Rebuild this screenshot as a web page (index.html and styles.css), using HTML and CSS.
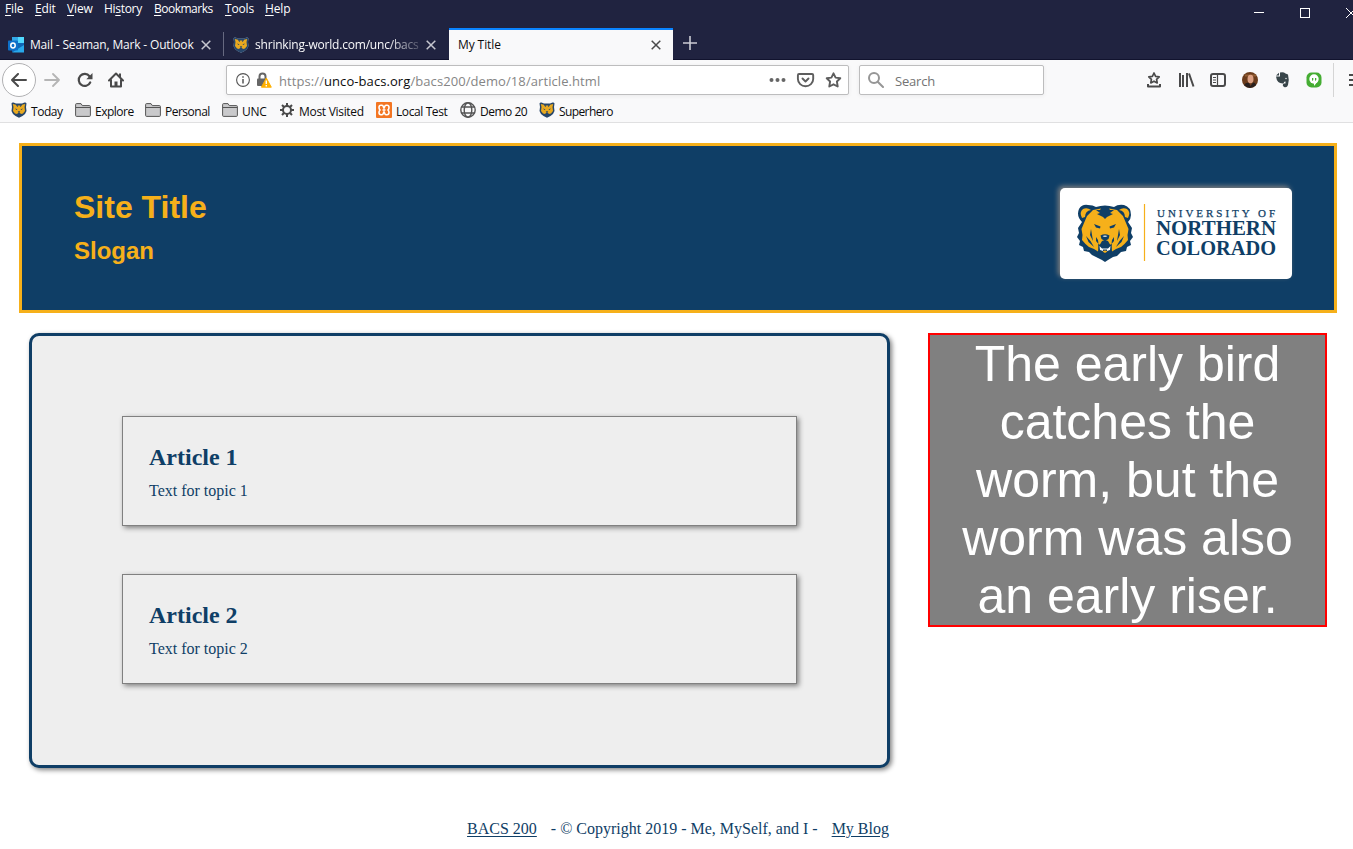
FILE: index.html
```html
<!DOCTYPE html>
<html lang="en">
<head>
<meta charset="utf-8">
<title>My Title</title>
<link rel="stylesheet" href="styles.css">
</head>
<body>
<svg class="defs" width="0" height="0">
  <symbol id="bear" viewBox="0 0 56 58">
    <path fill="#0f3e66" d="M2 5Q5 0 11 1Q16 1 19 3Q28 0 37 3Q41 0 47 1Q54 3 54 11Q54 15 51 18L55 24L54 29L56 33L53 37L54 41L50 43L49 47L44 48L40 52L36 53L31 56L28 58L25 56L19 53L15 51L12 48L7 47L6 43L2 41L3 37L0 33L2 29L1 24L5 18Q-1 12 2 5Z"/>
    <path fill="#f6b01a" d="M5 14Q2 8 6 5Q10 3 14 6Q8 7 8 13ZM51 14Q54 8 50 5Q46 3 42 6Q48 7 48 13Z"/>
    <path fill="#f6b01a" d="M16 6L24 4.500L23 6L33 6L32 4.500L40 6L46 12L49 19L51.500 25L50.500 31L51 36L47.500 40L44 43L39 45L35 47.500L34.500 43L31 37L28 36L25 37L21.500 43L21 47.500L17 45L12 43L8.500 40L5 36L5.500 31L4.500 25L7 19L10 12Z"/>
    <path fill="#0f3e66" d="M19 6L27 6H29L37 6L33 9L36 10L30 13L28 15L26 13L20 10L23 9Z"/>
    <path fill="#0f3e66" d="M17 20L23.500 22.500L23 24.500L19 23.500ZM39 20L32.500 22.500L33 24.500L37 23.500ZM14 25L13 31L16 37L15 31ZM42 25L43 31L40 37L41 31ZM9 32L11.500 38L17 43L13.500 37ZM47 32L44.500 38L39 43L42.500 37ZM19 33L19 37L21.500 40L21 36ZM37 33L37 37L34.500 40L35 36Z"/>
    <path fill="#0f3e66" d="M23.500 31.500Q28 29 32.500 31.500L31.500 35L28 37L24.500 35ZM21 40L25 41.500L28 40L31 41.500L35 40L34 47L28 50L22 47Z"/>
    <path fill="#fff" d="M25.500 32Q28 30.800 30.500 32L29 32.800H27ZM22.500 42L25 44.500H31L33.500 42L33 46L30 47L30 45.500H26V47L23 46Z"/>
    <path fill="#f6b01a" d="M25.500 47.500Q28 45.500 30.500 47.500L28 49Z"/>
  </symbol>
  <symbol id="bear-mini" viewBox="0 0 16 16">
    <path fill="#27466a" d="M.5 1.500Q1 0 2.500 .5L5 1.500H11L13.500 .5Q15 0 15.500 1.500L15 5L15.500 9L14 12L11.500 14L8 15.800L4.500 14L2 12L.5 9L1 5Z"/>
    <path fill="#e9a91f" d="M1.800 2L4 2.500L7 3.500H9L12 2.500L14.200 2L13.500 5L14 9L12 11.500L10 12L8 10L6 12L4 11.500L2 9L2.500 5Z"/>
    <path fill="#27466a" d="M5 2.500L7 3.500V5L5.500 4ZM11 2.500L9 3.500V5L10.500 4ZM4 6.500L6.500 7.300L5.500 8ZM12 6.500L9.500 7.300L10.500 8ZM6.700 9.200H9.300L8 10.700Z"/>
  </symbol>
  <symbol id="folder" viewBox="0 0 16 16">
    <path d="M.6 13.400V2.600Q.6 1.600 1.600 1.600H6L7.300 3.600H14.400Q15.400 3.600 15.400 4.600V13.400Q15.400 14.400 14.400 14.400H1.600Q.6 14.400 .6 13.400Z" fill="#c9c9cb" stroke="#555" stroke-width="1"/><path d="M.8 5.500H15.200" stroke="#555"/>
  </symbol>
  <symbol id="close" viewBox="0 0 10 10"><path d="M.7.7L9.3 9.3M9.3.7L.7 9.3" fill="none" stroke="currentColor" stroke-width="1.5"/></symbol>
</svg>

<header class="chrome">
  <div class="menubar">
    <nav class="menus">
      <span class="m1"><u>F</u>ile</span><span class="m2"><u>E</u>dit</span><span class="m3"><u>V</u>iew</span><span class="m4">Hi<u>s</u>tory</span><span class="m5"><u>B</u>ookmarks</span><span class="m6"><u>T</u>ools</span><span class="m7"><u>H</u>elp</span>
    </nav>
    <svg class="window-controls" width="100" height="20" viewBox="0 0 100 20" fill="none" stroke="#fff" shape-rendering="crispEdges"><path d="M1 12.5H11M47.5 8.5H56.500V17.500H47.5Z"/><path d="M93 8L103 18M103 8L93 18" shape-rendering="auto"/></svg>
  </div>
  <div class="tabs">
    <div class="tab tab-mail">
      <svg width="16" height="16" viewBox="0 0 16 16"><path fill="#1066b5" d="M4 0H16V15H4Z"/><path fill="#32a9e7" d="M4 0H10V6H4Z"/><path fill="#50d9ff" d="M10 0H16V6H10Z"/><path fill="#0358a7" d="M4 6H10V12H4Z"/><path fill="#28a8ea" d="M16 8V15.500H4L16 8Z"/><rect y="3.500" width="10" height="10" rx=".8" fill="#0d70c9"/><ellipse cx="5" cy="8.500" rx="2.200" ry="2.400" fill="none" stroke="#fff" stroke-width="1.500"/></svg>
      <span class="tab-title">Mail - Seaman, Mark - Outlook</span>
      <svg class="x" width="10" height="10"><use href="#close"/></svg>
    </div>
    <div class="tab tab-world">
      <svg width="16" height="16" class="haloed"><use href="#bear-mini"/></svg>
      <span class="tab-title fade">shrinking-world.com/unc/bacs</span>
      <svg class="x" width="10" height="10"><use href="#close"/></svg>
    </div>
    <div class="tab tab-active">
      <span class="tab-title">My Title</span>
      <svg class="x" width="10" height="10"><use href="#close"/></svg>
    </div>
    <svg class="plus" width="14" height="14" viewBox="0 0 14 14"><path d="M7 0V14M0 7H14" stroke="#cbccd4" stroke-width="1.600"/></svg>
  </div>
  <div class="navbar">
    <div class="back"><svg width="16" height="14" viewBox="0 0 16 14" fill="none" stroke="#4a4a4a" stroke-width="2" stroke-linecap="round" stroke-linejoin="round"><path d="M7 1L1 7L7 13M1 7H15"/></svg></div>
    <svg class="forward" width="16" height="14" viewBox="0 0 16 14" fill="none" stroke="#b5b5b5" stroke-width="1.800" stroke-linecap="round" stroke-linejoin="round"><path d="M9 1L15 7L9 13M15 7H1"/></svg>
    <svg class="reload" width="16" height="16" viewBox="0 0 16 16"><path d="M13.200 10.500A6 6 0 1 1 12.500 4.200" fill="none" stroke="#4a4a4a" stroke-width="2.200" stroke-linecap="round"/><path d="M15.500 1V7.200H9.300Z" fill="#4a4a4a"/></svg>
    <svg class="home" width="16" height="16" viewBox="0 0 16 16"><path d="M1 8.500L8 1.500L15 8.500M3 7.500V14.500H13V7.500" fill="none" stroke="#4a4a4a" stroke-width="2" stroke-linecap="round" stroke-linejoin="round"/><path d="M6.500 14V9.500H9.500V14ZM11 1.500H13V6L11 4Z" fill="#4a4a4a"/></svg>
    <div class="field url">
      <svg class="info" width="14" height="14" viewBox="0 0 14 14"><circle cx="7" cy="7" r="6.400" fill="none" stroke="#555" stroke-width="1.100"/><path d="M7 6V10.500M7 3.200V4.800" stroke="#555" stroke-width="1.500"/></svg>
      <svg class="lock" width="15" height="16" viewBox="0 0 15 16"><path d="M2.500 8V4.500A3 3 0 0 1 8.500 4.500V7" fill="none" stroke="#666" stroke-width="2"/><rect x="0" y="6.500" width="10" height="7.500" rx="1" fill="#666"/><path d="M9.300 6L14.300 15.200H4.400Z" fill="#ffb000" stroke="#ffb000" stroke-linejoin="round"/><path d="M9.300 8.500V12M9.300 13V14.500" stroke="#fff" stroke-width="1.400"/></svg>
      <span class="address">https://<b>unco-bacs.org</b>/bacs200/demo/18/article.html</span>
      <svg class="url-actions" width="74" height="16" viewBox="0 0 74 16"><g fill="#666"><circle cx="2.500" cy="8" r="2"/><circle cx="8.500" cy="8" r="2"/><circle cx="14.500" cy="8" r="2"/></g><g fill="none" stroke="#5e5e5e" stroke-width="1.900" stroke-linecap="round" stroke-linejoin="round"><path d="M30 2H43Q44.200 2 44.200 3.200V7A7.600 7.200 0 0 1 28.900 7V3.200Q28.900 2 30 2Z"/><path d="M33.500 6.500L36.500 9.500L39.500 6.500"/><path d="M64.500 1.300L66.600 5.600L71.300 6.200L67.900 9.500L68.700 14.500L64.500 12.300L60.300 14.500L61.100 9.500L57.700 6.200L62.400 5.600Z"/></g></svg>
    </div>
    <div class="field search">
      <svg width="16" height="16" viewBox="0 0 16 16" fill="none" stroke="#969696" stroke-width="2"><circle cx="6" cy="6" r="5"/><path d="M9.700 9.700L15 15" stroke-linecap="round"/></svg>
      <span>Search</span>
    </div>
    <svg class="tools" width="207" height="34" viewBox="0 0 207 34">
      <g fill="none" stroke="#4a4a4a" stroke-width="1.700" stroke-linejoin="round"><path d="M8 10L9.600 13.300L13.200 13.800L10.600 16.300L11.200 19.900L8 18.200L4.800 19.900L5.400 16.300L2.800 13.800L6.400 13.300Z"/><path stroke-width="2" d="M2 21V23.500H14V21"/></g>
      <path d="M34 10V24M37 12V24M41 10V24M43 10.500L47.500 23.500" fill="none" stroke="#4a4a4a" stroke-width="2"/>
      <rect x="65" y="11" width="14" height="12" rx="2" fill="none" stroke="#4a4a4a" stroke-width="2"/><path d="M71.500 11V23M67 14.500H70M67 17H70M67 19.500H70" stroke="#4a4a4a" stroke-width="1.200"/>
      <circle cx="104" cy="17" r="8" fill="#6b3c1c"/><path d="M99 12.500H110" stroke="#925c31" stroke-width="2"/><ellipse cx="104.500" cy="16" rx="3" ry="4.300" fill="#dda184"/><path d="M98 22Q100 19 103 20L104.500 23L107 19.500Q110 20 110 22Q104 28 98 22Z" fill="#29201e"/>
      <path d="M130 13.500H134V9.500Q137.500 8.500 139.500 10.500L142 11.500Q143.500 17 142 22Q141 25 138 24Q135.500 22 138 20.500H139.500L139.500 18.500Q138 18 137.500 20.500Q131 21 130 13.500ZM130 12.500L133 9.800V12.500Z" fill="#39464a"/><circle cx="140" cy="15.500" r=".7" fill="#fff"/>
      <rect x="160.500" y="9.500" width="15" height="15" rx="5" fill="#45ad32"/><circle cx="168" cy="16" r="4.700" fill="#fff"/><path d="M168 19V23L172 18Z" fill="#fff"/><path d="M166 15H167.300V17L166 18ZM169 15H170.300V17L169 18Z" fill="#45ad32"/>
      <path d="M187.500 0V34" stroke="#d5d5d5"/><path d="M203 12H219M203 17H219M203 22H219" stroke="#4a4a4a" stroke-width="2"/>
    </svg>
  </div>
  <nav class="bookmarks">
    <a class="b1"><svg width="16" height="16"><use href="#bear-mini"/></svg><span>Today</span></a>
    <a class="b2"><svg width="16" height="16"><use href="#folder"/></svg><span>Explore</span></a>
    <a class="b3"><svg width="16" height="16"><use href="#folder"/></svg><span>Personal</span></a>
    <a class="b4"><svg width="16" height="16"><use href="#folder"/></svg><span>UNC</span></a>
    <a class="b5"><svg width="16" height="16" viewBox="0 0 16 16" stroke="#4a4a4a" fill="none"><circle cx="8" cy="8" r="4" stroke-width="2"/><path stroke-width="2" d="M8 1V4M8 12V15M1 8H4M12 8H15M3 3L5 5M11 11L13 13M13 3L11 5M3 13L5 11"/></svg><span>Most Visited</span></a>
    <a class="b6"><svg width="16" height="16" viewBox="0 0 16 16"><rect width="16" height="16" rx="1" fill="#f37623"/><path d="M5 3.300H6Q7 3.300 7.300 4.700L8 6L8.700 4.700Q9 3.300 10 3.300H11Q13 3.300 13 5.500Q13 7 12 8Q13 9 13 10.500Q13 12.700 11 12.700H10Q9 12.700 8.700 11.300L8 10L7.300 11.300Q7 12.700 6 12.700H5Q3 12.700 3 10.500Q3 9 4 8Q3 7 3 5.500Q3 3.300 5 3.300ZM6.500 8H9.500" fill="none" stroke="#fff" stroke-width="1.600"/></svg><span>Local Test</span></a>
    <a class="b7"><svg width="16" height="16" viewBox="0 0 16 16" fill="none" stroke="#555" stroke-width="1.400"><circle cx="8" cy="8" r="7.200"/><ellipse cx="8" cy="8" rx="3.800" ry="7.200"/><path d="M1.500 5H14.500M1.500 11H14.500"/></svg><span>Demo 20</span></a>
    <a class="b8"><svg width="16" height="16"><use href="#bear-mini"/></svg><span>Superhero</span></a>
  </nav>
</header>

<div class="page">
  <section class="hero">
    <div><h1>Site Title</h1><h2>Slogan</h2></div>
    <div class="logo">
      <svg width="232" height="91" viewBox="0 0 232 91">
        <use href="#bear" x="17" y="16" width="56" height="58"/>
        <path d="M84.500 16V73" stroke="#f6b01a" stroke-width="1.200"/>
        <g class="logo-text">
          <text x="97" y="28.500" font-size="11" class="thin" textLength="118">UNIVERSITY OF</text>
          <text x="96" y="47" font-size="20.500" class="heavy" textLength="120" lengthAdjust="spacingAndGlyphs">NORTHERN</text>
          <text x="96" y="66.500" font-size="20.500" class="heavy" textLength="120" lengthAdjust="spacingAndGlyphs">COLORADO</text>
        </g>
      </svg>
    </div>
  </section>
  <div class="columns">
    <main>
      <article><h2>Article 1</h2><p>Text for topic 1</p></article>
      <article><h2>Article 2</h2><p>Text for topic 2</p></article>
    </main>
    <aside>The early bird catches the worm, but the worm was also an early riser.</aside>
  </div>
  <footer><a>BACS 200</a><span>- © Copyright 2019 - Me, MySelf, and I -</span><a>My Blog</a></footer>
</div>
</body>
</html>
```
FILE: styles.css
```css
* { box-sizing: border-box; }
body { margin: 0; width: 1353px; height: 849px; overflow: hidden; background: #fff; font-family: "Liberation Serif", "Times New Roman", serif; color: #0f3e66; }
h1, h2, p { margin: 0; }
svg { flex: none; display: block; }
.defs { position: absolute; }
.chrome { height: 123px; background: #f9f9fa; border-bottom: 1px solid #e0e0e1; font: 12px/18px "Open Sans", "Noto Sans", sans-serif; color: #0c0c0d; white-space: nowrap; }
.menubar { display: flex; justify-content: space-between; height: 28px; background: #202340; color: #fff; }
.menus { display: flex; padding-left: 5px; letter-spacing: -.15px; }
.menus u { text-underline-offset: 2px; }
.m1 { width: 30px; } .m2 { width: 32px; } .m3 { width: 37px; } .m4 { width: 50px; letter-spacing: -.3px; } .m5 { width: 71px; letter-spacing: -.5px; } .m6 { width: 40px; } .m7 { width: 30px; }
.tabs { display: flex; height: 32px; background: #202340; border-bottom: 1px solid #11132e; color: #f9f9fa; }
.tab { display: flex; align-items: center; height: 32px; padding: 1px 0 0; }
.tab .x { margin-left: auto; color: #c6c7cf; }
.tab-mail { width: 224px; padding-left: 8px; padding-right: 13px; gap: 6px; letter-spacing: -.17px; background: linear-gradient(#666980, #666980) 100% 4px / 1px 24px no-repeat; }
.tab-world { width: 225px; padding-left: 9px; padding-right: 13px; gap: 6px; letter-spacing: -.2px; }
.haloed { overflow: visible; filter: drop-shadow(0 0 .6px #a5b0c0); }
.fade { width: 165px; -webkit-mask-image: linear-gradient(90deg, #000 80%, #0003); mask-image: linear-gradient(90deg, #000 80%, #0003); }
.tab-active { width: 224px; padding-left: 9px; padding-right: 12px; background: #f9f9fa; border-top: 2px solid #0a84ff; color: #0c0c0d; letter-spacing: -.1px; padding-top: 0; }
.tab-active .x { color: #4a4a4a; }
.plus { margin: 8px 0 0 10px; }
.navbar { display: flex; align-items: center; height: 40px; }
.back { display: flex; align-items: center; justify-content: center; width: 34px; height: 34px; margin-left: 2px; border: 1px solid #b1b1b3; border-radius: 50%; background: #fff; }
.forward { margin-left: 8px; }
.reload { margin-left: 17px; }
.home { margin-left: 15px; }
.field { display: flex; align-items: center; height: 30px; border: 1px solid #bdbdbe; border-radius: 2px; background: #fff; box-shadow: 0 1px 4px #00000010; }
.url { width: 623px; margin-left: 102px; padding-left: 9px; padding-right: 5px; }
.lock { margin-left: 7px; }
.address { margin-left: 7px; font-size: 13px; letter-spacing: .08px; color: #858585; padding-top: 1px; }
.address b { font-weight: 400; color: #0c0c0d; }
.url-actions { margin-left: auto; }
.search { width: 185px; margin-left: 10px; padding-left: 8px; gap: 11px; font-size: 13px; letter-spacing: -.2px; color: #737373; }
.search span { padding-top: 1px; }
.tools { margin-left: 102px; }
.bookmarks { display: flex; height: 22px; padding-left: 11px; letter-spacing: -.3px; }
.bookmarks a { display: flex; align-items: center; gap: 4px; }
.bookmarks svg { margin-top: -2px; }
.bookmarks span { padding-top: 1px; }
.b1 { width: 64px; letter-spacing: -.45px; } .b2 { width: 70px; letter-spacing: -.5px; } .b3 { width: 77px; letter-spacing: -.5px; } .b4 { width: 57px; } .b5 { width: 97px; } .b6 { width: 84px; letter-spacing: -.4px; } .b7 { width: 79px; letter-spacing: -.5px; } .b8 { letter-spacing: -.6px; }
.page { padding: 20px 16px 0 19px; }
.hero { display: flex; justify-content: space-between; align-items: flex-start; height: 170px; padding: 42px 42px 0 52px; border: 3px solid #f6b01a; background: #0f3e66; color: #f6b01a; font-family: "Liberation Sans", Arial, sans-serif; }
.hero h1 { padding-top: 1px; font-size: 32px; line-height: 37px; }
.hero h2 { margin-top: 11px; font-size: 24px; line-height: 28px; }
.logo { width: 232px; height: 91px; border-radius: 5px; background: #fff; box-shadow: -2px -2px 5px #808080; }
.logo-text { fill: #0f3e66; font-family: "Liberation Serif", serif; }
.heavy { font-weight: 700; }
.thin { stroke: #0f3e66; stroke-width: .25px; }
.columns { display: flex; justify-content: space-between; align-items: flex-start; padding: 20px 10px 0; }
main { width: 861px; height: 435px; padding: 80px 90px; border: 3px solid #0f3e66; border-radius: 10px; background: #eee; box-shadow: 2px 2px 5px #808080; }
article { height: 110px; padding: 27px 26px; border: 1px solid #808080; box-shadow: 2px 2px 5px #808080; }
article + article { margin-top: 48px; }
article h2 { font-size: 24px; line-height: 27px; }
article p { margin-top: 11px; font-size: 16px; line-height: 18px; }
aside { width: 399px; height: 294px; padding: 0 20px; border: 2px solid #f00; background: #808080; color: #fff; text-align: center; font: 50px/58px "Liberation Sans", Arial, sans-serif; }
footer { display: flex; justify-content: center; gap: 14px; margin-top: 52px; font-size: 16px; line-height: 18px; }
footer a { text-decoration: underline; text-underline-offset: 2px; }
```
